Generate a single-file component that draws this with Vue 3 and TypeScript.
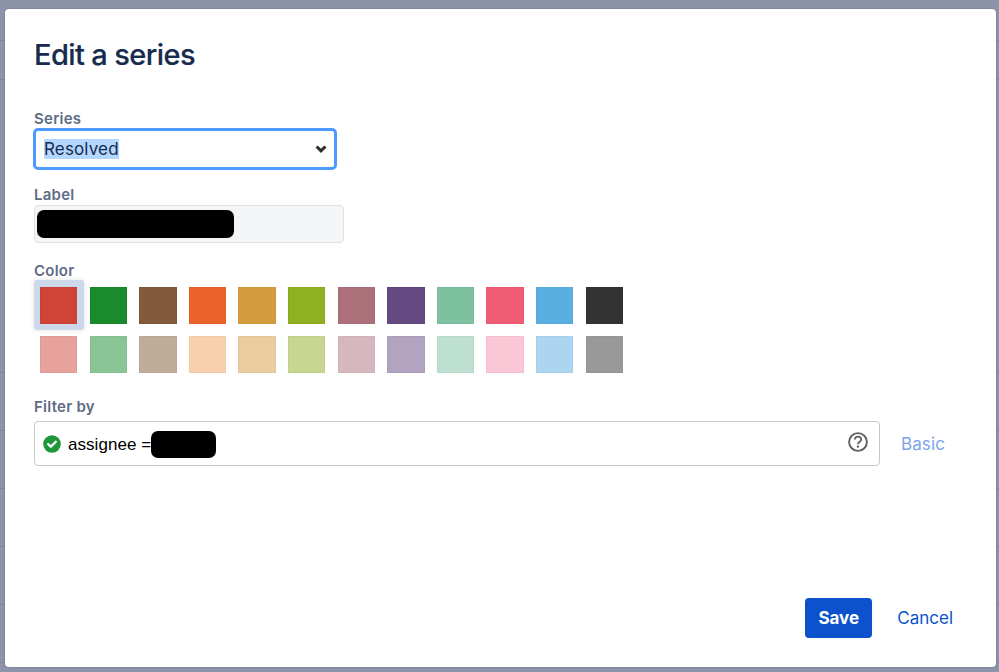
<script setup lang="ts">
import { ref } from 'vue'

const strong: string[] = ['#d04437', '#1b8a2b', '#815b3a', '#eb632b', '#d39c3f', '#8eb021', '#ac707a', '#654982', '#7dc1a1', '#f15c75', '#59afe1', '#333333']
const soft: string[] = ['#e6a29b', '#8ac596', '#bfad9a', '#f8d0ac', '#e9cd9e', '#c7d791', '#d6b7bd', '#b2a4c1', '#bee0d0', '#fbc6d5', '#acd5f0', '#999999']
const colors = [...strong, ...soft]
const selected = ref(0)
const rows: number[] = [40, 79, 372, 430, 488, 546, 604, 662]
</script>

<template>
  <main class="page">
    <i v-for="y in rows" :key="y" class="rule" :style="{ top: y + 'px' }"></i>
    <section class="dialog" role="dialog">
      <h1>Edit a series</h1>

      <label class="caption">Series</label>
      <div class="select">
        <span class="value">Resolved</span>
        <svg width="12" height="10" viewBox="0 0 12 10"><path d="M1.6 2.5 6 6.8l4.4-4.3" fill="none" stroke="#2b2b2b" stroke-width="3" /></svg>
      </div>

      <label class="caption label-caption">Label</label>
      <div class="input"><span class="redacted wide"></span></div>

      <label class="caption color-caption">Color</label>
      <div class="palette">
        <button v-for="(c, i) in colors" :key="c" type="button" class="swatch" :class="{ selected: selected === i }" @click="selected = i">
          <span class="chip" :style="{ background: c }"></span>
        </button>
      </div>

      <label class="caption filter-caption">Filter by</label>
      <div class="filter-row">
        <div class="query">
          <svg class="ok" width="18" height="18" viewBox="0 0 18 18"><circle cx="9" cy="9" r="8.8" fill="#1e963c" /><path d="m5.2 9.1 2.6 2.6 5-5" fill="none" stroke="#fff" stroke-width="2.3" stroke-linecap="round" stroke-linejoin="round" /></svg>
          <span class="jql">assignee =</span>
          <span class="redacted short"></span>
          <svg class="help" width="20" height="20" viewBox="0 0 20 20"><circle cx="10" cy="10" r="8.9" fill="none" stroke="#606060" stroke-width="1.9" /><path d="M6.8 7.6C6.8 5.7 8.1 4.7 10 4.7s3.2 1.1 3.2 2.8c0 2.1-3.2 2.3-3.2 4.7" fill="none" stroke="#606060" stroke-width="1.8" /><circle cx="10" cy="14.6" r="1.2" fill="#606060" /></svg>
        </div>
        <a class="basic">Basic</a>
      </div>

      <footer>
        <button type="button" class="save">Save</button>
        <a class="cancel">Cancel</a>
      </footer>
    </section>
  </main>
</template>

<style>
body { margin: 0; }
</style>

<style scoped>
* { box-sizing: border-box; }
.page {
  position: relative;
  width: 999px;
  height: 672px;
  padding: 9px 3px 5px 5px;
  background: #8b94a8;
  overflow: hidden;
  font-family: Inter, "Liberation Sans", sans-serif;
}
.rule { position: absolute; left: 0; width: 100%; height: 1px; background: #7d879c; }
.dialog {
  position: relative;
  display: flex;
  flex-direction: column;
  width: 991px;
  height: 658px;
  padding: 26px 43px 29px 29px;
  background: #fff;
  border-radius: 4px;
  box-shadow: 0 0 2px rgba(65, 76, 105, .5);
}
h1 { margin: 0 0 34px; height: 40px; font-size: 29px; line-height: 40px; font-weight: 500; letter-spacing: -0.6px; color: #172b4d; -webkit-text-stroke: .2px #172b4d; }
.caption { height: 20px; font-size: 15px; line-height: 20px; font-weight: 600; letter-spacing: .25px; color: #5e6c84; }
.caption:first-of-type { margin-bottom: -1px; }
.select {
  display: flex;
  align-items: center;
  justify-content: space-between;
  width: 304px;
  height: 42px;
  margin-left: -1px;
  padding: 0 7px 0 8px;
  border: 3px solid #4c9aff;
  border-radius: 5px;
}
.value { height: 20px; line-height: 20px; background: #b3d7ff; font-size: 17px; letter-spacing: .15px; color: #172b4d; }
.label-caption { margin-top: 15px; }
.input {
  display: flex;
  align-items: center;
  width: 310px;
  height: 38px;
  padding-left: 1px;
  border: 1.5px solid #dfe1e6;
  border-radius: 4px;
  background: #f4f5f7;
}
.redacted { flex: none; background: #000; border-radius: 7px; }
.wide { width: 197px; height: 28px; margin-left: .5px; }
.color-caption { margin-top: 18px; }
.palette { display: grid; grid-template-columns: repeat(12, 49.6px); grid-auto-rows: 49.6px; margin-top: -.6px; }
.swatch { display: grid; place-items: center; padding: 0; border: 0; border-radius: 3px; background: transparent; }
.swatch.selected { background: #cbd9eb; box-shadow: 0 0 5px rgba(0, 0, 0, .12); }
.chip { width: 37.4px; height: 37.4px; border: 1px solid rgba(0, 0, 0, .03); }
.filter-caption { margin-top: 17.6px; }
.filter-row { display: flex; align-items: center; margin-top: 4px; }
.query {
  display: flex;
  align-items: center;
  width: 846px;
  height: 45px;
  padding: 0 11px 0 8px;
  border: 1.5px solid #c8c8c8;
  border-radius: 4px;
}
.ok { flex: none; }
.jql { margin: 2px 0 0 7px; font: 17px/22px "Liberation Sans", Arial, sans-serif; letter-spacing: .05px; color: #000; white-space: nowrap; }
.short { width: 65px; height: 27px; margin-top: 1px; }
.help { margin: -4px 0 0 auto; }
.basic { margin-left: 21px; font-size: 17px; color: #7ba4e9; letter-spacing: .1px; }
footer { display: flex; align-items: center; justify-content: flex-end; margin-top: auto; }
.save { width: 67px; height: 40px; padding: 0; border: 0; border-radius: 4px; background: #0b52cc; color: #fff; font: 700 17px/24px Inter, sans-serif; }
.cancel { margin-left: 25px; font-size: 17px; line-height: 24px; color: #0b52cc; }
</style>
